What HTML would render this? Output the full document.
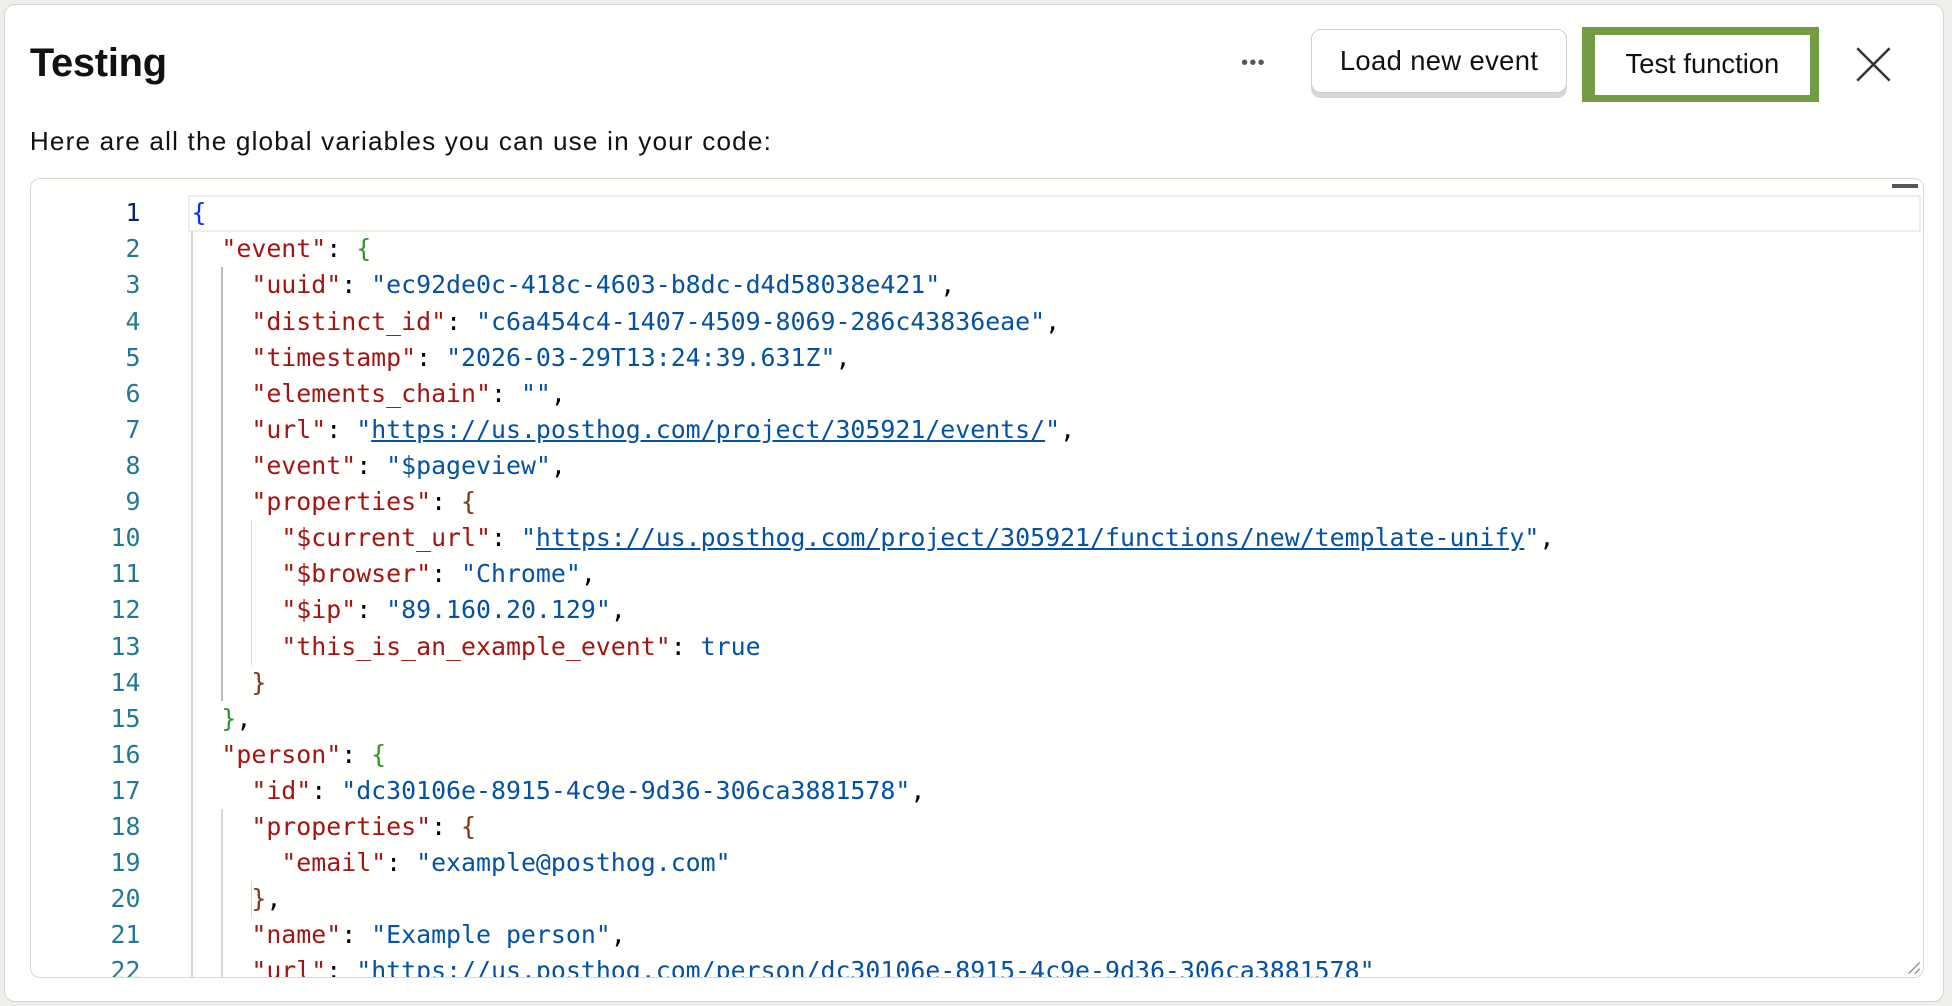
<!DOCTYPE html>
<html><head><meta charset="utf-8"><style>
html,body{margin:0;padding:0}
body{width:1568px;height:808px;zoom:1.2449;background:#eeeeea;font-family:"Liberation Sans",Arial,sans-serif;overflow:hidden;position:relative}
.card{position:absolute;left:3px;top:3px;width:1557px;height:800px;background:#fff;border:1px solid #d6d6d0;border-radius:9px}
.title{position:absolute;left:24px;top:33px;font-size:32px;font-weight:bold;color:#111;letter-spacing:-0.2px}
.sub{position:absolute;left:24px;top:101px;font-size:21px;color:#111;letter-spacing:0.95px}
.dots{position:absolute;left:997px;top:42px;font-size:16px;color:#555;letter-spacing:1px}
.btn1{position:absolute;left:1053px;top:23px;width:206px;height:52px;border:1px solid #cfcfcb;border-radius:8px;background:#fff;box-shadow:0 4px 0 #d6d6d2;box-sizing:border-box;font-size:22px;color:#111;text-align:center;line-height:50px;letter-spacing:0.3px}
.btn2{position:absolute;left:1271px;top:22px;width:190px;height:60px;background:#739c44;box-sizing:border-box;padding:6px 7px 6px 10px}
.btn2 div{background:#fff;height:100%;font-size:22px;color:#111;text-align:center;line-height:46px}
.close{position:absolute;left:1491px;top:38px}
.ed{position:absolute;left:24px;top:143px;width:1520px;height:641px;border:1px solid #d8d8d3;border-radius:8px;background:#fffffe;overflow:hidden}
.ln{position:absolute;left:0;width:88px;text-align:right;font-family:"DejaVu Sans Mono",monospace;font-size:20px;color:#237893;line-height:29px}
.code{position:absolute;left:129px;font-family:"DejaVu Sans Mono",monospace;font-size:20px;line-height:29px;white-space:pre;color:#000}
.k{color:#a31515}.s{color:#0451a5}.u{color:#0451a5;text-decoration:underline}
.b1{color:#0431fa}.b2{color:#319331}.b3{color:#7b3814}
.act{position:absolute;left:126px;top:13px;width:1389px;height:26px;border:2px solid #eeeeee}
.g{position:absolute;width:1px;background:#d8d8d8}
</style></head><body>
<div class="card"></div>
<div class="title">Testing</div>
<div class="dots">•••</div>
<div class="btn1">Load new event</div>
<div class="btn2"><div>Test function</div></div>
<svg class="close" width="28" height="28" viewBox="0 0 28 28"><path d="M1 1L27 27M27 1L1 27" stroke="#333" stroke-width="2" fill="none"/></svg>
<div class="sub">Here are all the global variables you can use in your code:</div>
<div class="ed">
<div class="act"></div>
<div class="g" style="left:129px;top:42px;height:620px"></div>
<div class="g" style="left:153px;top:71px;height:348px;background:#bbb"></div>
<div class="g" style="left:177px;top:274px;height:116px"></div>
<div class="g" style="left:153px;top:506px;height:140px"></div>
<div class="g" style="left:177px;top:564px;height:29px"></div>
<div class="ln" style="top:13px"><span style="color:#0b216f">1</span><br>2<br>3<br>4<br>5<br>6<br>7<br>8<br>9<br>10<br>11<br>12<br>13<br>14<br>15<br>16<br>17<br>18<br>19<br>20<br>21<br>22</div>
<div class="code" style="top:13px"><span class="b1">{</span>
  <span class="k">"event"</span>: <span class="b2">{</span>
    <span class="k">"uuid"</span>: <span class="s">"ec92de0c-418c-4603-b8dc-d4d58038e421"</span>,
    <span class="k">"distinct_id"</span>: <span class="s">"c6a454c4-1407-4509-8069-286c43836eae"</span>,
    <span class="k">"timestamp"</span>: <span class="s">"2026-03-29T13:24:39.631Z"</span>,
    <span class="k">"elements_chain"</span>: <span class="s">""</span>,
    <span class="k">"url"</span>: <span class="s">"</span><span class="u">https://us.posthog.com/project/305921/events/</span><span class="s">"</span>,
    <span class="k">"event"</span>: <span class="s">"$pageview"</span>,
    <span class="k">"properties"</span>: <span class="b3">{</span>
      <span class="k">"$current_url"</span>: <span class="s">"</span><span class="u">https://us.posthog.com/project/305921/functions/new/template-unify</span><span class="s">"</span>,
      <span class="k">"$browser"</span>: <span class="s">"Chrome"</span>,
      <span class="k">"$ip"</span>: <span class="s">"89.160.20.129"</span>,
      <span class="k">"this_is_an_example_event"</span>: <span class="s">true</span>
    <span class="b3">}</span>
  <span class="b2">}</span>,
  <span class="k">"person"</span>: <span class="b2">{</span>
    <span class="k">"id"</span>: <span class="s">"dc30106e-8915-4c9e-9d36-306ca3881578"</span>,
    <span class="k">"properties"</span>: <span class="b3">{</span>
      <span class="k">"email"</span>: <span class="s">"example@posthog.com"</span>
    <span class="b3">}</span>,
    <span class="k">"name"</span>: <span class="s">"Example person"</span>,
    <span class="k">"url"</span>: <span class="s">"</span><span class="u">https://us.posthog.com/person/dc30106e-8915-4c9e-9d36-306ca3881578</span><span class="s">"</span>
</div>
<div style="position:absolute;left:1495px;top:4px;width:21px;height:3px;background:#555"></div>
<svg style="position:absolute;right:2px;bottom:2px" width="12" height="12"><path d="M11 2L2 11M11 7L7 11" stroke="#888" stroke-width="1"/></svg>
</div>
</body></html>
